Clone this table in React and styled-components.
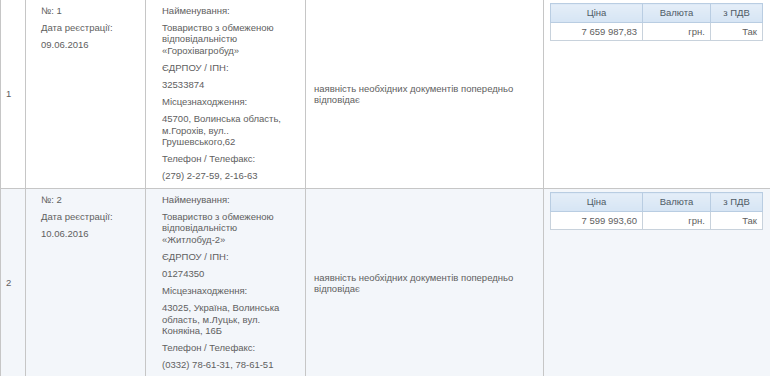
import React from "react";
import styled, { createGlobalStyle } from "styled-components";

const Global = createGlobalStyle`
  html, body {
    margin: 0;
    padding: 0;
    background: #fff;
    overflow: hidden;
  }
  body {
    font-family: "Liberation Sans", Arial, sans-serif;
  }
`;

const Table = styled.table`
  border-collapse: collapse;
  table-layout: fixed;
  width: 790px;
  margin-top: -1px;
  font-size: 9.5px;
  color: #606060;
`;

const Row = styled.tr`
  background: ${({ alt }) => (alt ? "#f3f6fa" : "#fff")};
  height: 189px;
`;

const Cell = styled.td`
  border: 1px solid #c6c6c6;
  vertical-align: ${({ middle }) => (middle ? "middle" : "top")};
  padding: ${({ pad }) => pad || "4px 6px"};
  line-height: 11.2px;
`;

const Block = styled.div`
  margin-bottom: 6px;
  &:last-child {
    margin-bottom: 0;
  }
`;

const Price = styled.table`
  border-collapse: collapse;
  width: 213px;
  table-layout: fixed;
  font-size: 9.5px;
  th {
    background: linear-gradient(#e4eef8, #d6e5f4);
    border: 1px solid #b9cde2;
    color: #4f5b66;
    font-weight: normal;
    height: 18px;
    padding: 0;
    text-align: center;
  }
  td {
    background: #fff;
    border: 1px solid #c8d2dc;
    color: #606060;
    height: 17px;
    padding: 0 5px;
    text-align: right;
  }
`;

const rows = [
  {
    n: "1",
    date: "09.06.2016",
    name: ["Товариство з обмеженою", "відповідальністю", "«Горохівагробуд»"],
    code: "32533874",
    addr: ["45700, Волинська область,", "м.Горохів, вул..", "Грушевського,62"],
    phone: "(279) 2-27-59, 2-16-63",
    price: "7 659 987,83",
  },
  {
    n: "2",
    date: "10.06.2016",
    name: ["Товариство з обмеженою", "відповідальністю", "«Житлобуд-2»"],
    code: "01274350",
    addr: ["43025, Україна, Волинська", "область, м.Луцьк, вул.", "Конякіна, 16Б"],
    phone: "(0332) 78-61-31, 78-61-51",
    price: "7 599 993,60",
  },
];

const Lines = ({ items }) => (
  <Block>
    {items.map((t) => (
      <div key={t}>{t}</div>
    ))}
  </Block>
);

export default function App() {
  return (
    <>
      <Global />
      <Table>
        <colgroup>
          <col style={{ width: 25 }} />
          <col style={{ width: 120 }} />
          <col style={{ width: 160 }} />
          <col style={{ width: 238 }} />
          <col />
        </colgroup>
        <tbody>
          {rows.map((r, i) => (
            <Row key={r.n} alt={i % 2 === 1}>
              <Cell middle pad="0 5px">{r.n}</Cell>
              <Cell pad="5px 6px 4px 15px">
                <Block>№: {r.n}</Block>
                <Block>Дата реєстрації:</Block>
                <Block>{r.date}</Block>
              </Cell>
              <Cell pad="5px 6px 4px 16px">
                <Block>Найменування:</Block>
                <Lines items={r.name} />
                <Block>ЄДРПОУ / ІПН:</Block>
                <Block>{r.code}</Block>
                <Block>Місцезнаходження:</Block>
                <Lines items={r.addr} />
                <Block>Телефон / Телефакс:</Block>
                <Block>{r.phone}</Block>
              </Cell>
              <Cell middle pad="0 20px 0 8px">
                наявність необхідних документів попередньо відповідає
              </Cell>
              <Cell pad="3px 6px">
                <Price>
                  <colgroup>
                    <col style={{ width: 92 }} />
                    <col style={{ width: 68 }} />
                    <col />
                  </colgroup>
                  <thead>
                    <tr>
                      <th>Ціна</th>
                      <th>Валюта</th>
                      <th>з ПДВ</th>
                    </tr>
                  </thead>
                  <tbody>
                    <tr>
                      <td>{r.price}</td>
                      <td>грн.</td>
                      <td>Так</td>
                    </tr>
                  </tbody>
                </Price>
              </Cell>
            </Row>
          ))}
        </tbody>
      </Table>
    </>
  );
}
